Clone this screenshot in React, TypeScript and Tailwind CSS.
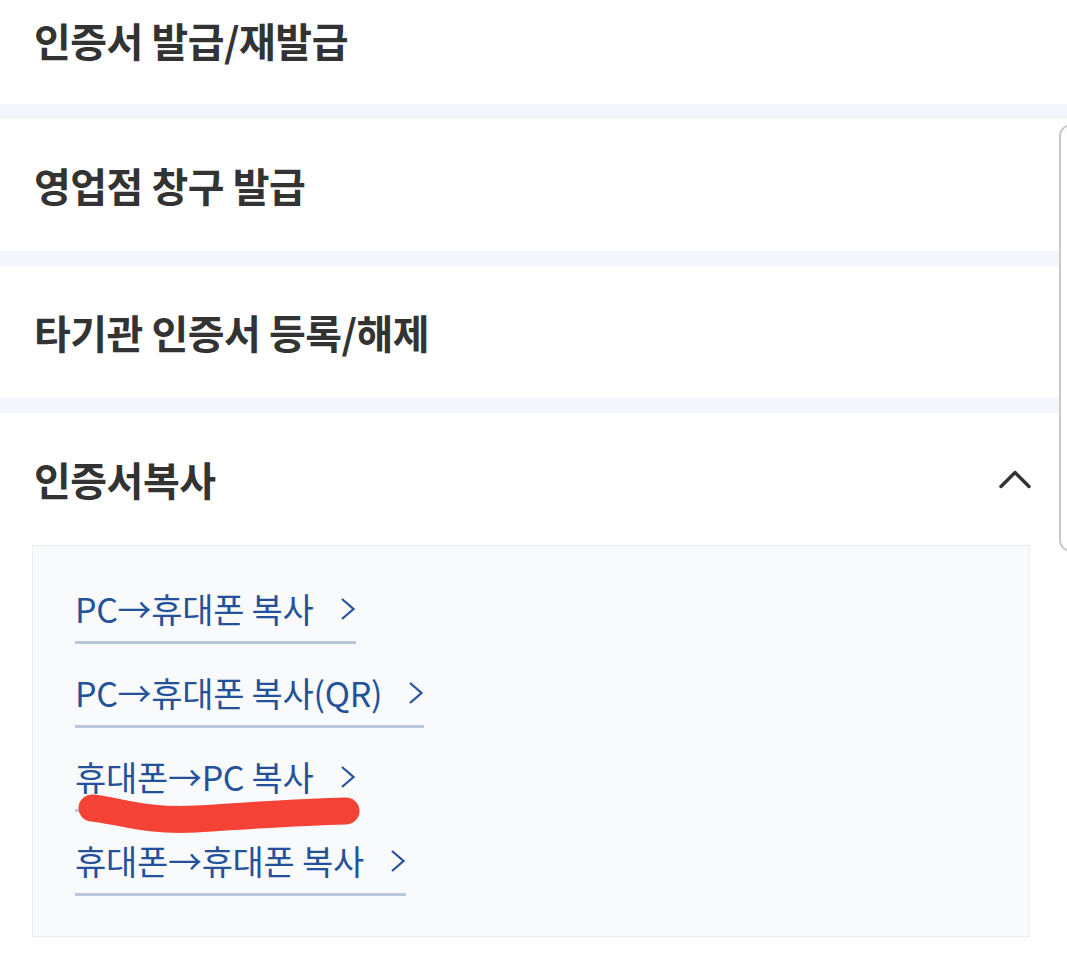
import React from "react";

const font = { fontFamily: '"Noto Sans CJK KR", "Noto Sans", sans-serif' };

const menus = ["인증서 발급/재발급", "영업점 창구 발급", "타기관 인증서 등록/해제"];

const copyLinks = [
  "PC→휴대폰 복사",
  "PC→휴대폰 복사(QR)",
  "휴대폰→PC 복사",
  "휴대폰→휴대폰 복사",
];

const ChevronUp = () => (
  <svg width="32" height="20" viewBox="0 0 32 20" fill="none">
    <path d="M2 17.5 L16 3.5 L30 17.5" stroke="#333" strokeWidth="3.4" strokeLinecap="round" strokeLinejoin="round" />
  </svg>
);

const ChevronRight = () => (
  <svg width="16" height="24" viewBox="0 0 16 24" fill="none" className="ml-[26px] mr-[0px]">
    <path d="M2 2 L13.5 12 L2 22" stroke="#23519a" strokeWidth="2.2" strokeLinejoin="miter" />
  </svg>
);

const Scribble = () => (
  <svg className="absolute left-[66px] top-[790px] pointer-events-none" width="310" height="50" viewBox="0 0 310 50">
    <path
      d="M26 18 C 50 20, 80 32, 130 29 C 180 26, 230 22, 280 21"
      stroke="#f44236"
      strokeWidth="27"
      strokeLinecap="round"
      fill="none"
    />
  </svg>
);

export default function App() {
  return (
    <div className="relative w-[1067px] h-[965px] bg-white overflow-hidden" style={font}>
      {menus.map((m, i) => (
        <div key={m}>
          <div
            className={
              i === 0
                ? "h-[104px] flex items-start pt-[18px] pl-[34px]"
                : "h-[132px] flex items-center pl-[34px]"
            }
          >
            <span className="text-[40px] leading-[44px] font-bold text-[#333333] tracking-[-0.5px]">{m}</span>
          </div>
          <div className="h-[15px] bg-[#f3f6fa]" />
        </div>
      ))}

      <div className="h-[132px] flex items-center justify-between pl-[34px] pr-[36px]">
        <span className="text-[40px] leading-[44px] font-bold text-[#333333] tracking-[-0.5px]">인증서복사</span>
        <ChevronUp />
      </div>

      <div className="ml-[32px] w-[998px] h-[392px] bg-[#f9fafc] border border-[#ececec] pt-[30px] pl-[42px]">
        {copyLinks.map((l) => (
          <div key={l} className="h-[84px]">
            <a className="inline-flex items-center h-[68px] border-b-[3px] border-[#b9c7dc] text-[#23519a] text-[34px] leading-none">
              <span className="tracking-[-0.3px]">{l}</span>
              <ChevronRight />
            </a>
          </div>
        ))}
      </div>

      <Scribble />

      <div className="absolute left-[1059px] top-[124px] w-[30px] h-[428px] rounded-[12px] border-2 border-[#c9c9c9] bg-white" />
    </div>
  );
}
